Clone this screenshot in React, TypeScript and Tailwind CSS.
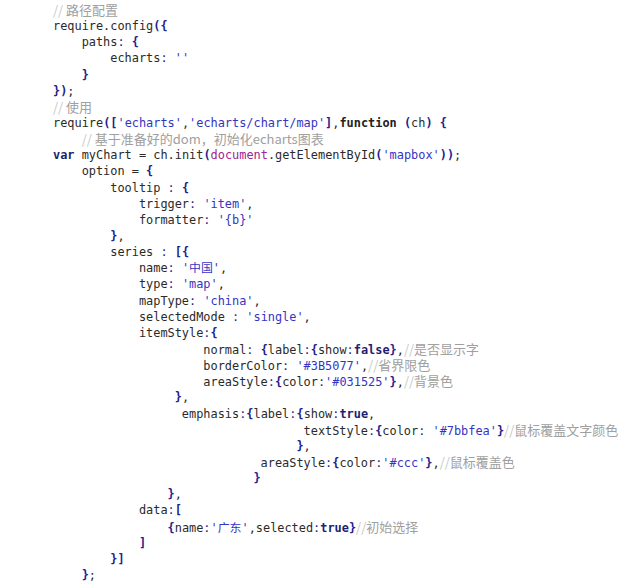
import React from "react";

// 代码行：[缩进列数, 文本]
const lines: [number, string][] = [
  [0, "// 路径配置"],
  [0, "require.config({"],
  [4, "paths: {"],
  [8, "echarts: ''"],
  [4, "}"],
  [0, "});"],
  [0, "// 使用"],
  [0, "require(['echarts','echarts/chart/map'],function (ch) {"],
  [4, "// 基于准备好的dom，初始化echarts图表"],
  [0, "var myChart = ch.init(document.getElementById('mapbox'));"],
  [4, "option = {"],
  [8, "tooltip : {"],
  [12, "trigger: 'item',"],
  [12, "formatter: '{b}'"],
  [8, "},"],
  [8, "series : [{"],
  [12, "name: '中国',"],
  [12, "type: 'map',"],
  [12, "mapType: 'china',"],
  [12, "selectedMode : 'single',"],
  [12, "itemStyle:{"],
  [21, "normal: {label:{show:false},//是否显示字"],
  [21, "borderColor: '#3B5077',//省界限色"],
  [21, "areaStyle:{color:'#031525'},//背景色"],
  [17, "},"],
  [18, "emphasis:{label:{show:true,"],
  [35, "textStyle:{color: '#7bbfea'}//鼠标覆盖文字颜色"],
  [34, "},"],
  [29, "areaStyle:{color:'#ccc'},//鼠标覆盖色"],
  [28, "}"],
  [16, "},"],
  [12, "data:["],
  [16, "{name:'广东',selected:true}//初始选择"],
  [12, "]"],
  [8, "}]"],
  [4, "};"],
];

const tokenRe =
  /(\/\/.*$)|('[^']*')|(\b(?:var|false|true)\b)|(\bfunction\b)|(\bdocument\b)|([{}()[\]])|(:)|([\w$.#]+|\s+|.)/g;

function Line({ text }: { text: string }) {
  const out: React.ReactNode[] = [];
  let m: RegExpExecArray | null;
  let i = 0;
  tokenRe.lastIndex = 0;
  while ((m = tokenRe.exec(text)) !== null) {
    const k = i++;
    if (m[1]) {
      out.push(
        <span key={k} className="inline-block h-[16px] font-['Noto_Sans_CJK_SC',sans-serif] text-[13px] leading-[16px]">
          <span className="text-[#c8c8c8]">//</span>
          <span className="text-[#a0a0a0]">{m[1].slice(2)}</span>
        </span>
      );
    } else if (m[2]) {
      out.push(<span key={k} className="text-[#3434c4]">{m[2]}</span>);
    } else if (m[3]) {
      out.push(<span key={k} className="font-bold text-[#1e1e72]">{m[3]}</span>);
    } else if (m[4]) {
      out.push(<span key={k} className="font-bold text-[#222]">{m[4]}</span>);
    } else if (m[5]) {
      out.push(<span key={k} className="text-[#a3238f]">{m[5]}</span>);
    } else if (m[6]) {
      out.push(<span key={k} className="font-bold text-[#22228c]">{m[6]}</span>);
    } else if (m[7]) {
      out.push(<span key={k} className="text-[#26268a]">{m[7]}</span>);
    } else {
      out.push(<span key={k}>{m[8]}</span>);
    }
  }
  return <>{out}</>;
}

export default function App() {
  return (
    <div className="w-[640px] h-[586px] overflow-hidden bg-white pt-[2px] pl-[53px] font-['DejaVu_Sans_Mono','Noto_Sans_CJK_SC',monospace] text-[11.9px] leading-[16.2px] text-[#2a2a2a]">
      {lines.map(([indent, text], idx) => (
        <div key={idx} className="whitespace-pre h-[16.15px]">
          {" ".repeat(indent)}
          <Line text={text} />
        </div>
      ))}
    </div>
  );
}
